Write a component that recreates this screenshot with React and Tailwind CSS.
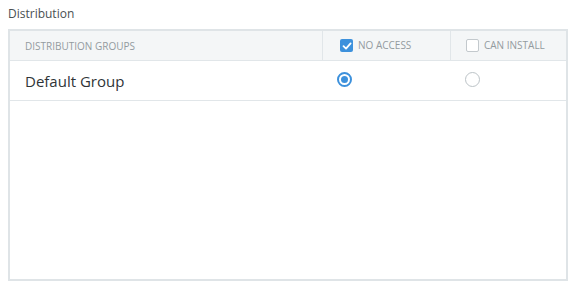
import React from 'react';

function Checkbox({ checked }) {
  if (checked) {
    return (
      <span className="block w-[13px] h-[13px] rounded-[2px] bg-[#3d91dc] flex items-center justify-center">
        <svg width="10" height="10" viewBox="0 0 10 10" fill="none">
          <path d="M1.5 5.2 L4 7.6 L8.6 2.4" stroke="white" strokeWidth="1.8" strokeLinecap="round" strokeLinejoin="round" />
        </svg>
      </span>
    );
  }
  return <span className="block w-[13px] h-[13px] rounded-[2px] border border-[#c3c9cd] bg-white" />;
}

function Radio({ checked }) {
  if (checked) {
    return (
      <span className="w-[15px] h-[15px] rounded-full border-2 border-[#3d91dc] flex items-center justify-center bg-white">
        <span className="block w-[7px] h-[7px] rounded-full bg-[#3d91dc]" />
      </span>
    );
  }
  return <span className="block w-[15px] h-[15px] rounded-full border border-[#bcc3c7] bg-white" />;
}

export default function App() {
  return (
    <div className="w-[582px] h-[293px] bg-white pt-[7px] px-2" style={{ fontFamily: '"Open Sans", "Noto Sans", sans-serif' }}>
      <div className="text-[12px] leading-[14px] text-[#4a4f52] mb-[8px]">Distribution</div>

      <div className="w-[560px] h-[252px] border-2 border-[#dfe4e7] bg-white">
        {/* Header */}
        <div className="flex h-[30px] bg-[#f4f6f7] border-b border-[#e1e6e9] text-[10px] text-[#939b9f] uppercase">
          <div className="w-[312px] flex items-center pl-[15px] pt-[1px]">Distribution Groups</div>
          <div className="w-[128px] flex items-center gap-[5px] pl-[17px] border-l border-[#e1e6e9]">
            <Checkbox checked />
            <span>No Access</span>
          </div>
          <div className="flex-1 flex items-center gap-[5px] pl-[15px] border-l border-[#e1e6e9]">
            <Checkbox />
            <span>Can Install</span>
          </div>
        </div>

        {/* Row */}
        <div className="flex h-[40px] border-b border-[#e1e6e9]">
          <div className="w-[312px] flex items-center pl-[15px] text-[15px] text-[#2f3437] pt-[1px]">Default Group</div>
          <div className="w-[128px] pl-[15px] pt-[11px]">
            <Radio checked />
          </div>
          <div className="flex-1 pl-[15px] pt-[11px]">
            <Radio />
          </div>
        </div>
      </div>
    </div>
  );
}
